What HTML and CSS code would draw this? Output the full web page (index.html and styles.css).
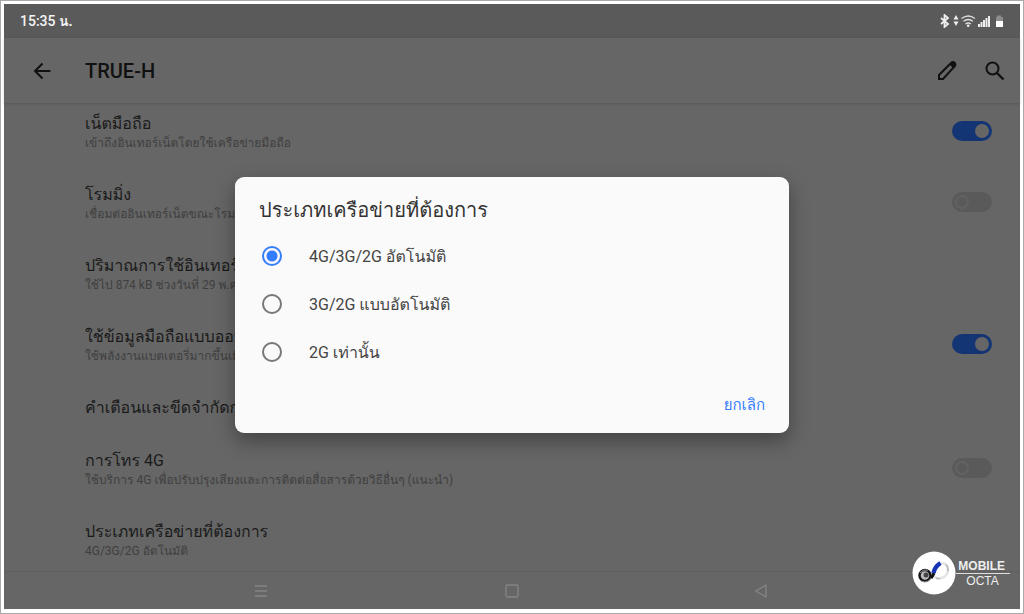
FILE: index.html
```html
<!DOCTYPE HTML>
<html lang="th">

<head>
    <meta charset="UTF-8">
    <meta name="viewport" content="width=device-width, initial-scale=1">
    <title>TRUE-H</title>
    <link rel="stylesheet" href="styles.css">
</head>

<body>
    <div class="screen">
        <div class="status-bar">
            <span>15:35 <b>น.</b></span>
            <svg class="status-icons" width="66" height="14" viewBox="0 0 66 14">
                <path d="M1 4l7 6-3.500 3V1L8 4l-7 6" fill="none" stroke="#eee" stroke-width="1.800"/>
                <path d="M13.500 5.500L16 1l2.500 4.500zM13.500 7.500h5L16 12z" fill="#eee"/>
                <g fill="none" stroke="#ddd" stroke-width="1.300">
                    <path d="M21.500 4.500q6.700-5 13.400 0M23.500 7.300q4.700-3.600 9.400 0M25.500 10q2.700-2 5.400 0"/>
                </g>
                <circle cx="28.200" cy="11.800" r="1.300" fill="#eee"/>
                <path d="M38 10h2v3h-2zM40.500 8h2v5h-2zM43 6h2v7h-2zM45.500 4h2v9h-2zM48 2h2v11h-2z" fill="#eee"/>
                <path d="M57 1.500h4V3h2v4h-7V3h1z" fill="#8c8c8c"/>
                <path d="M56 7h7v6h-7z" fill="#fff"/>
            </svg>
        </div>

        <header class="toolbar">
            <button class="icon-button" type="button" aria-label="กลับ">
                <svg width="24" height="24" viewBox="0 0 24 24"><path d="M20.500 12H5M12.500 4.500L5 12l7.500 7.500" fill="none" stroke="#111" stroke-width="2"/></svg>
            </button>
            <h1>TRUE-H</h1>
            <button class="icon-button" type="button" aria-label="แก้ไข">
                <svg width="24" height="24" viewBox="0 0 24 24"><path d="M4 20v-4L16.500 3.500q1.500-1 3 .500 1.500 1.500.500 3L8 20z" fill="none" stroke="#111" stroke-width="2"/><path d="M14.500 5.500L17 3q2-1 3.500.500T21 7l-2.500 2.500z" fill="#111"/></svg>
            </button>
            <button class="icon-button" type="button" aria-label="ค้นหา">
                <svg width="24" height="24" viewBox="0 0 24 24"><circle cx="9.500" cy="9.500" r="6" fill="none" stroke="#111" stroke-width="2"/><path d="M14 14l6.500 6.500" stroke="#111" stroke-width="2.400"/></svg>
            </button>
        </header>

        <main class="settings">
            <label class="setting">
                <span class="text">
                    <span class="name">เน็ตมือถือ</span>
                    <span class="note">เข้าถึงอินเทอร์เน็ตโดยใช้เครือข่ายมือถือ</span>
                </span>
                <input class="switch" type="checkbox" checked>
            </label>
            <label class="setting">
                <span class="text">
                    <span class="name">โรมมิ่ง</span>
                    <span class="note">เชื่อมต่ออินเทอร์เน็ตขณะโรมมิ่ง</span>
                </span>
                <input class="switch" type="checkbox">
            </label>
            <div class="setting">
                <span class="text">
                    <span class="name">ปริมาณการใช้อินเทอร์เน็ต</span>
                    <span class="note">ใช้ไป 874 kB ช่วงวันที่ 29 พ.ค.</span>
                </span>
            </div>
            <label class="setting">
                <span class="text">
                    <span class="name">ใช้ข้อมูลมือถือแบบออนไลน์</span>
                    <span class="note">ใช้พลังงานแบตเตอรี่มากขึ้นเมื่อเปิด</span>
                </span>
                <input class="switch" type="checkbox" checked>
            </label>
            <div class="setting">
                <span class="text">
                    <span class="name">คำเตือนและขีดจำกัดการใช้</span>
                </span>
            </div>
            <label class="setting">
                <span class="text">
                    <span class="name">การโทร 4G</span>
                    <span class="note">ใช้บริการ 4G เพื่อปรับปรุงเสียงและการติดต่อสื่อสารด้วยวิธีอื่นๆ (แนะนำ)</span>
                </span>
                <input class="switch" type="checkbox">
            </label>
            <div class="setting">
                <span class="text">
                    <span class="name">ประเภทเครือข่ายที่ต้องการ</span>
                    <span class="note">4G/3G/2G อัตโนมัติ</span>
                </span>
            </div>
        </main>

        <nav class="nav-bar">
            <button class="nav-button" type="button" aria-label="เมนู">
                <svg width="16" height="16" viewBox="0 0 16 16"><path d="M2 3h12M2 8h12M2 13h12" stroke="#858585" stroke-width="1.500"/></svg>
            </button>
            <button class="nav-button" type="button" aria-label="หน้าหลัก">
                <svg width="16" height="16" viewBox="0 0 16 16"><rect x="2" y="2" width="12" height="12" rx="1.500" fill="none" stroke="#858585" stroke-width="1.300"/></svg>
            </button>
            <button class="nav-button" type="button" aria-label="ย้อนกลับ">
                <svg width="16" height="16" viewBox="0 0 16 16"><path d="M11 2v12L.700 8z" fill="none" stroke="#858585" stroke-width="1.300" stroke-linejoin="round"/></svg>
            </button>
        </nav>

        <div class="overlay">
            <form class="dialog" role="dialog" aria-labelledby="dialog-title">
                <h2 id="dialog-title">ประเภทเครือข่ายที่ต้องการ</h2>
                <label class="option"><input type="radio" name="network" checked>4G/3G/2G อัตโนมัติ</label>
                <label class="option"><input type="radio" name="network">3G/2G แบบอัตโนมัติ</label>
                <label class="option"><input type="radio" name="network">2G เท่านั้น</label>
                <button class="cancel" type="button">ยกเลิก</button>
            </form>
        </div>

        <div class="brand">
            <svg width="44" height="44" viewBox="0 0 44 44">
                <circle cx="22" cy="22" r="21.500" fill="#fff"/>
                <circle cx="13" cy="24.500" r="5.500" fill="#bbb" stroke="#15151b" stroke-width="2.500"/>
                <circle cx="14" cy="24" r="2.500" fill="#444"/>
                <path d="M8 22q3-4 8-3M9 30q7 3 11-4" fill="none" stroke="#999" stroke-width="1"/>
                <path d="M19 27q2-2 3-5" fill="none" stroke="#111" stroke-width="3"/>
                <path d="M21.500 22q1-6 7-10" fill="none" stroke="#1734b8" stroke-width="4.500"/>
                <path d="M29 12q7 0 7 7 0 5-5 7.500-5 2-9-1" fill="none" stroke="#e4e4e4" stroke-width="2.500"/>
                <path d="M34 13.500q2.500 3 2 7M24 27q2 1 4 .500" fill="none" stroke="#bbb" stroke-width="1.500"/>
            </svg>
            <div class="brand-name">
                <strong>MOBILE</strong>
                <span>OCTA</span>
            </div>
        </div>
    </div>
</body>

</html>
```
FILE: styles.css
```css
*,
*::before {
    box-sizing: border-box;
}

body {
    margin: 0;
    padding: 3px 3px 4px;
    min-height: 100vh;
    display: flex;
    border: 1px solid #a9a9a9;
    background-color: #fff;
    font-family: Roboto, Garuda, Waree, Loma, sans-serif;
}

button {
    padding: 0;
    border: 0;
    background: none;
    font-family: inherit;
    cursor: pointer;
}

svg {
    display: block;
}

.screen {
    position: relative;
    flex: 1;
    display: flex;
    flex-direction: column;
    background-color: #666;
}

.status-bar {
    height: 34px;
    padding: 0 14px 0 16px;
    display: flex;
    align-items: center;
    justify-content: space-between;
    background-color: #5a5a5a;
    color: #f4f4f4;
    font-size: 14px;
    font-weight: 500;
    line-height: 24px;
}

.toolbar {
    height: 65px;
    padding: 0 13px 0 26px;
    display: flex;
    align-items: center;
    gap: 24px;
    box-shadow: 0 1px 3px rgba(0, 0, 0, 0.15);
}

.toolbar h1 {
    flex: 1;
    margin: 0 0 0 7px;
    color: #111;
    font-size: 20px;
    font-weight: 500;
}

.settings {
    flex: 1;
    padding: 9px 28px 0 81px;
    display: flex;
    flex-direction: column;
    gap: 29px;
}

.setting {
    display: flex;
    justify-content: space-between;
}

.text {
    display: flex;
    flex-direction: column;
}

.name {
    color: #1a1a1a;
    font-size: 16px;
    line-height: 24px;
}

.note {
    margin-bottom: 4px;
    color: #3f3f3f;
    font-size: 12px;
    line-height: 14px;
}

.switch {
    appearance: none;
    width: 40px;
    height: 20px;
    margin: 9px 0 0;
    padding: 3px;
    display: flex;
    border-radius: 10px;
    background-color: #5a5a5a;
}

.switch::before {
    content: "";
    width: 14px;
    height: 14px;
    border: 2px solid #626262;
    border-radius: 50%;
}

.switch:checked {
    justify-content: flex-end;
    background-color: #143574;
}

.switch:checked::before {
    background-color: #666;
    border-color: #666;
}

.nav-bar {
    height: 38px;
    padding: 0 132px;
    display: flex;
    align-items: center;
    justify-content: space-around;
    border-top: 1px solid #5f5f5f;
}

.overlay {
    position: absolute;
    inset: 0;
    padding-bottom: 3px;
    display: flex;
    align-items: center;
    justify-content: center;
}

.dialog {
    width: 90%;
    max-width: 554px;
    padding: 17px 24px 12px;
    display: flex;
    flex-direction: column;
    border-radius: 9px;
    background-color: #fafafa;
    box-shadow: 0 8px 20px rgba(0, 0, 0, 0.35);
}

.dialog h2 {
    margin: 0 0 6px;
    color: #333;
    font-size: 20px;
    font-weight: 400;
    line-height: 32px;
}

.option {
    height: 48px;
    padding-left: 3px;
    display: flex;
    align-items: center;
    gap: 27px;
    color: #444;
    font-size: 16px;
}

.option input {
    appearance: none;
    width: 20px;
    height: 20px;
    margin: 0;
    border: 2px solid #777;
    border-radius: 50%;
}

.option input:checked {
    border-color: #367cfe;
    background: radial-gradient(circle, #367cfe 5px, transparent 6px);
}

.cancel {
    height: 32px;
    margin-top: 13px;
    align-self: flex-end;
    color: #367cfe;
    font-size: 15px;
}

.brand {
    position: absolute;
    right: 10px;
    bottom: 14px;
    display: flex;
    align-items: center;
    color: #eee;
    font-family: "Liberation Sans", sans-serif;
    font-size: 12px;
    line-height: 14px;
}

.brand-name {
    display: flex;
    flex-direction: column;
}

.brand-name strong {
    padding: 0 5px 0 2px;
    border-bottom: 1px solid #ddd;
}

.brand-name span {
    padding-left: 10px;
}
```
